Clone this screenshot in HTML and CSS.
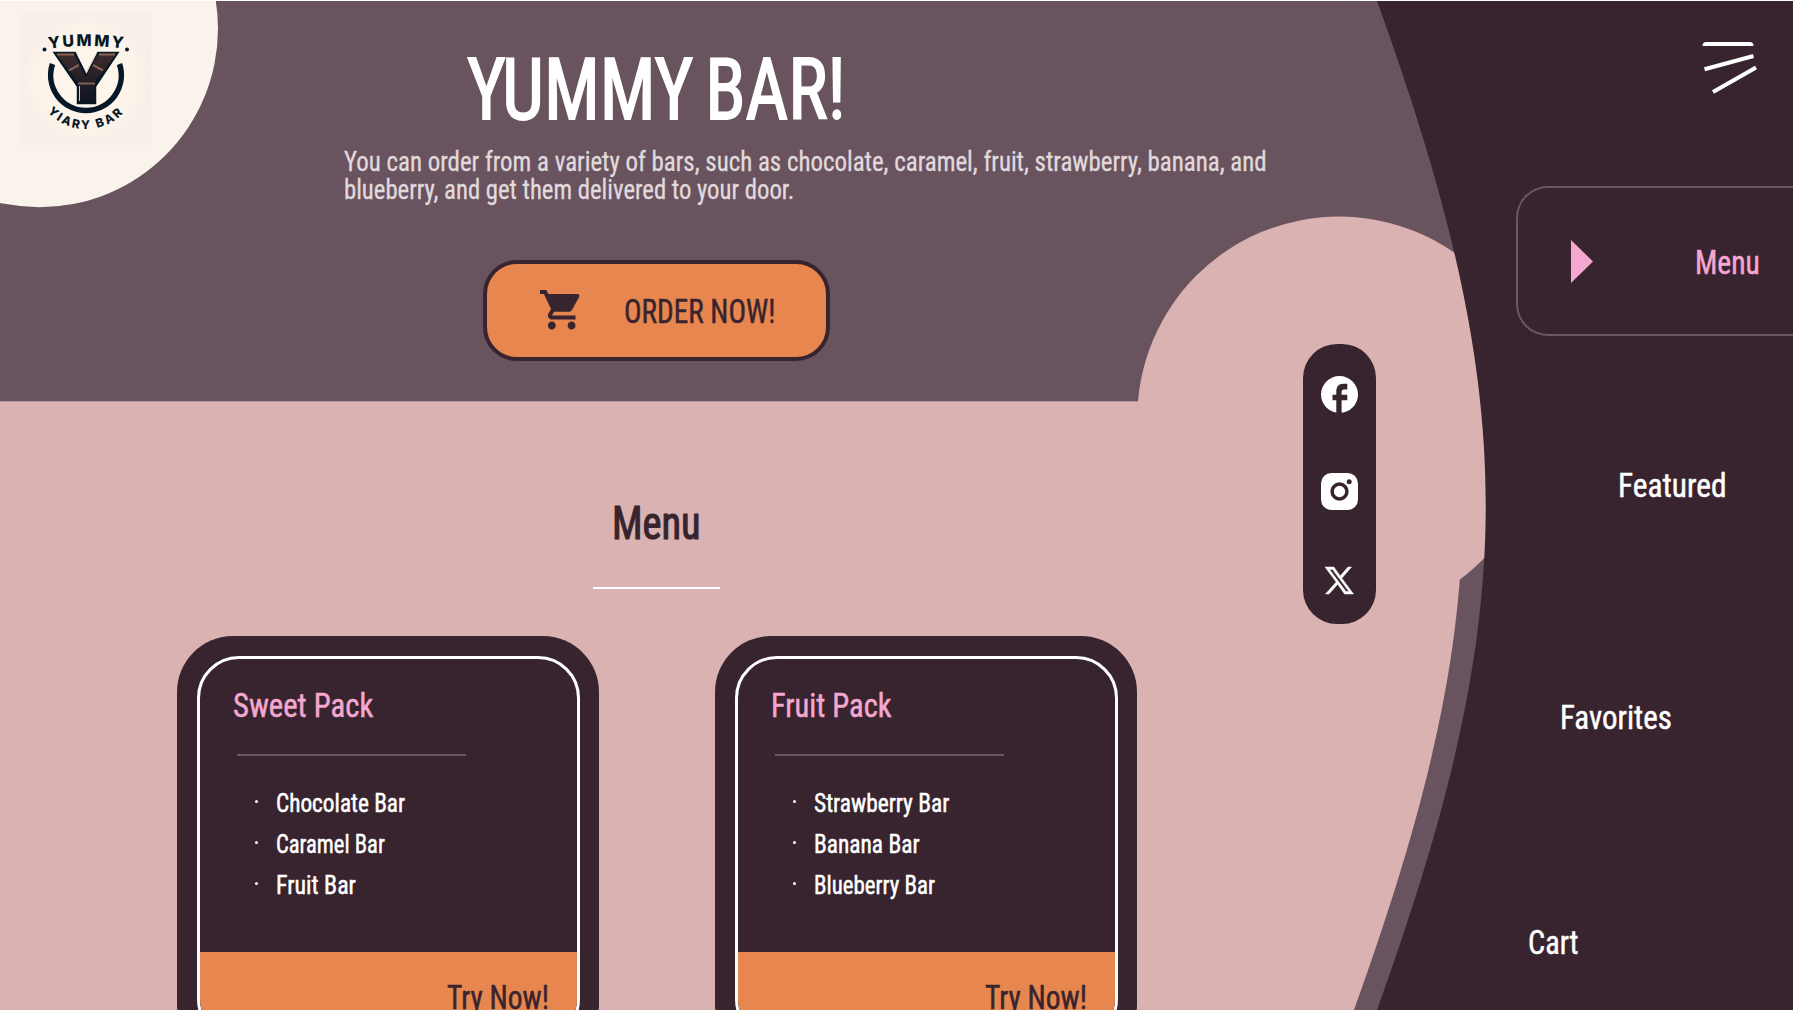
FILE: index.html
```html
<!DOCTYPE html>
<html lang="en">
<head>
<meta charset="utf-8">
<title>Yummy Bar</title>
<link rel="stylesheet" href="styles.css">
</head>
<body>
<svg class="backdrop" viewBox="0 0 1793 1010" aria-hidden="true">
  <rect class="fill-rose" width="1793" height="1010"/>
  <rect class="fill-plum" width="1793" height="401.3"/>
  <path class="fill-plum" transform="translate(-23 0)" d="M1377 1C1522 402 1522 608 1377 1010H1816V1Z"/>
  <circle class="fill-rose" cx="1339" cy="418.2" r="201.7"/>
  <path class="fill-dark" d="M1377 1C1522 402 1522 608 1377 1010H1793V1Z"/>
  <circle class="fill-cream" cx="39.5" cy="28.8" r="178.5"/>
  <rect class="fill-white" width="1793" height="1"/>
</svg>

<svg class="logo" viewBox="20 14 131 131" role="img" aria-label="Yummy Bar logo">
  <defs>
    <radialGradient id="paper"><stop offset="0" stop-color="#fff7ec"/><stop offset=".75" stop-color="#fcf3ea"/><stop offset="1" stop-color="#f7eee8"/></radialGradient>
    <linearGradient id="choc" x1="0" y1="0" x2="0" y2="1"><stop offset="0" stop-color="#3d2b2c"/><stop offset="1" stop-color="#0d1420"/></linearGradient>
    <path id="arc-top" d="M42 50Q86 42 132 50"/>
    <path id="arc-bottom" d="M38 96.200A51.500 51.500 0 0 0 134 96.200"/>
  </defs>
  <rect x="20" y="14" width="131" height="131" fill="url(#paper)"/>
  <path d="M52.500 64A35.300 35.300 0 1 0 119.500 64" fill="none" stroke="#061826" stroke-width="5.600"/>
  <path d="M51 51H76L86.500 72L97 51H121L97 87V105H76V87Z" fill="#061826" stroke="#fff7ec" stroke-width="1.500"/>
  <path d="M56 53.500H74L79 64L69 71ZM99 53.500H116L104 71L92 64ZM70 72L80 66L86 77L92 66L103 72L95 82H77ZM79 85H94V103H79Z" fill="url(#choc)"/>
  <path d="M57 54.500H74M99 54.500H115M69 70.500L79 65M93 65L103 70.500M78 83.500H95" stroke="#8a6255" stroke-width="2.200" fill="none"/>
  <path d="M79.500 86V101M86 73L96 54" stroke="#d8c9c0" stroke-width="1" fill="none"/>
  <circle cx="44.500" cy="49.500" r="2" fill="#061826"/><circle cx="127" cy="49.500" r="2" fill="#061826"/>
  <text class="logo-text logo-text-top"><textPath href="#arc-top" startOffset="50%">YUMMY</textPath></text>
  <text class="logo-text"><textPath href="#arc-bottom" startOffset="50%">YIARY BAR</textPath></text>
</svg>

<div class="page">
  <main class="main">
    <header class="hero">
      <h1 class="title"><span class="fit fit-title">YUMMY BAR!</span></h1>
      <p class="lead">
        <span class="fit fit-lead-1">You can order from a variety of bars, such as chocolate, caramel, fruit, strawberry, banana, and</span>
        <span class="fit fit-lead-2">blueberry, and get them delivered to your door.</span>
      </p>
      <a class="order">
        <svg class="order-icon" viewBox="0 0 24 24"><path d="M7 18c-1.100 0-1.990.9-1.990 2S5.900 22 7 22s2-.9 2-2-.9-2-2-2zM1 2v2h2l3.600 7.590-1.350 2.450c-.16.28-.25.61-.25.96 0 1.100.9 2 2 2h12v-2H7.420c-.14 0-.25-.11-.25-.25l.03-.12.9-1.630h7.450c.75 0 1.410-.41 1.750-1.030l3.580-6.490c.08-.14.12-.31.12-.48 0-.55-.45-1-1-1H5.210l-.94-2H1zm16 16c-1.100 0-1.990.9-1.990 2s.89 2 1.990 2 2-.9 2-2-.9-2-2-2z"/></svg>
        <span class="fit fit-order">ORDER NOW!</span>
      </a>
    </header>

    <section class="menu">
      <h2 class="heading"><span class="fit fit-heading">Menu</span></h2>
      <div class="cards">
        <article class="card">
          <div class="card-inner">
            <div class="card-body">
              <h3 class="card-title"><span class="fit fit-sweet">Sweet Pack</span></h3>
              <ul class="items">
                <li><span class="fit fit-chocolate">Chocolate Bar</span></li>
                <li><span class="fit fit-caramel">Caramel Bar</span></li>
                <li><span class="fit fit-fruit">Fruit Bar</span></li>
              </ul>
            </div>
            <a class="try"><span class="fit fit-try">Try Now!</span></a>
          </div>
        </article>
        <article class="card">
          <div class="card-inner">
            <div class="card-body">
              <h3 class="card-title"><span class="fit fit-fruit-pack">Fruit Pack</span></h3>
              <ul class="items">
                <li><span class="fit fit-strawberry">Strawberry Bar</span></li>
                <li><span class="fit fit-banana">Banana Bar</span></li>
                <li><span class="fit fit-blueberry">Blueberry Bar</span></li>
              </ul>
            </div>
            <a class="try"><span class="fit fit-try">Try Now!</span></a>
          </div>
        </article>
      </div>
    </section>
  </main>

  <nav class="nav">
    <svg class="burger" viewBox="0 0 60 56"><path class="fill-white" d="M2.500 6Q2.500 2 6 2H50Q53.500 2 53.500 6Z"/><path class="stroke-white" d="M4.500 29.300L53.500 16M13 52L56 27.500"/></svg>
    <a class="nav-active">
      <svg class="marker" viewBox="0 0 22 43"><path d="M0 0L22 21.500L0 43Z"/></svg>
      <span class="fit fit-nav-menu">Menu</span>
    </a>
    <a class="nav-link nav-featured"><span class="fit fit-featured">Featured</span></a>
    <a class="nav-link nav-favorites"><span class="fit fit-favorites">Favorites</span></a>
    <a class="nav-link nav-cart"><span class="fit fit-cart">Cart</span></a>
  </nav>
</div>

<div class="social">
  <svg class="facebook" viewBox="0 0 37 37"><circle class="fill-white" cx="18.500" cy="18.500" r="18.500"/><path class="fill-dark" d="M15.300 37V24.300H11.500V18.800H15.300V15.500C15.300 10.500 17.800 7.800 22.300 7.800H26.300V13.600H23.200C21.300 13.600 20.600 14.500 20.600 16V18.800H26.300V24.300H20.600V37Z"/></svg>
  <svg class="instagram" viewBox="0 0 37 37"><rect class="fill-white" width="37" height="37" rx="10.500"/><circle cx="18.500" cy="18.500" r="7.400" fill="none" stroke="#38242e" stroke-width="3.500"/><circle class="fill-dark" cx="28.200" cy="8.700" r="2.500"/></svg>
  <svg class="x-logo" viewBox="0 0 28 27"><path class="fill-white" stroke="#fff" stroke-width=".5" fill-rule="evenodd" d="M0 0H8.900L15.200 8.900L23 0H26.500L16.800 11.200L28.500 27H19.600L12.700 17.300L4 27H.5L11.200 15ZM4.500 2.400L21 24.500H23.900L7.600 2.400Z"/></svg>
</div>
</body>
</html>
```
FILE: styles.css
```css
* { box-sizing: border-box; margin: 0; padding: 0; }

:root {
  --rose: #dbb2b2;
  --plum: #69535f;
  --dark: #38242e;
  --cream: #faf3ec;
  --orange: #e7874f;
  --pink: #f4a8d0;
}

body {
  position: relative;
  height: 1010px;
  overflow: hidden;
  background: var(--rose);
  color: #fff;
  font-family: Roboto, "Liberation Sans", sans-serif;
  font-stretch: 75%;
  font-weight: 400;
}

.fill-rose { fill: var(--rose); }
.fill-plum { fill: var(--plum); }
.fill-dark { fill: var(--dark); }
.fill-cream { fill: var(--cream); }
.fill-white { fill: #fff; }
.stroke-white { fill: none; stroke: #fff; stroke-width: 4; }

.backdrop { position: absolute; inset: 0; width: 1793px; height: 1010px; }
.logo { position: absolute; left: 20px; top: 14px; width: 131px; height: 131px; }
.logo-text { font: 800 12px Inter, sans-serif; fill: #061826; text-anchor: middle; letter-spacing: 2.300px; }
.logo-text-top { font-size: 16px; letter-spacing: 2.200px; }

.page {
  position: relative;
  display: grid;
  grid-template-columns: 1313px 480px;
  height: 1010px;
}

/* Condensed lettering: each label is squeezed horizontally */
.fit {
  display: inline-block;
  white-space: nowrap;
  transform: scaleX(var(--sx, .9));
  transform-origin: left;
  -webkit-text-stroke: .5px currentColor;
}
.fit-title { --sx: .86; word-spacing: -6px; -webkit-text-stroke-width: 1.800px; }
.fit-lead-1 { --sx: .922; }
.fit-lead-2 { --sx: .916; }
.lead .fit { -webkit-text-stroke-width: .3px; }
.fit-order { --sx: .858; }
.fit-heading { --sx: .86; -webkit-text-stroke-width: 1.200px; }
.fit-sweet { --sx: .902; }
.fit-fruit-pack { --sx: .897; }
.fit-chocolate { --sx: .895; }
.fit-caramel { --sx: .868; }
.fit-fruit { --sx: .92; }
.fit-strawberry { --sx: .9; }
.fit-banana { --sx: .9; }
.fit-blueberry { --sx: .88; }
.fit-try { --sx: .867; }
.fit-nav-menu { --sx: .87; }
.fit-featured { --sx: .923; }
.fit-favorites { --sx: .91; }
.fit-cart { --sx: .89; }

.hero { height: 401px; padding-top: 47px; }
.title { padding-left: 467px; font-size: 86px; font-weight: 400; line-height: 86px; }
.lead { display: flex; flex-direction: column; margin-top: 15px; padding-left: 344px; font-size: 27px; line-height: 28px; color: #e1dadd; }
.order {
  display: flex;
  align-items: center;
  width: 347px;
  height: 101px;
  margin: 55.500px 0 0 483.400px;
  padding-left: 50.500px;
  border: 4px solid var(--dark);
  border-radius: 34px;
  background: var(--orange);
  color: var(--dark);
  font-size: 34px;
  line-height: 34px;
}
.order .fit { padding-top: 2px; }
.order-icon { width: 47.400px; height: 47.400px; margin-right: 39px; fill: var(--dark); }

.menu { padding-top: 98px; }
.heading {
  width: 127px;
  height: 90px;
  margin-left: 593.400px;
  padding-left: 18.500px;
  border-bottom: 2px solid #fff;
  color: var(--dark);
  font-size: 47px;
  font-weight: 400;
  line-height: 48px;
}
.cards { display: flex; gap: 116px; margin: 47px 0 0 177px; }
.card { width: 422px; height: 424px; padding: 19.500px; border-radius: 56px; background: var(--dark); }
.card-inner { height: 385px; overflow: hidden; border: 3px solid #fff; border-radius: 42px; }
.card-body { height: 293px; padding: 29px 0 0 33.500px; }
.card-title {
  width: 232px;
  height: 66px;
  color: var(--pink);
  font-size: 34px;
  font-weight: 400;
  line-height: 34px;
}
.items { width: 229px; margin-left: 4px; padding: 27px 0 0 38.500px; border-top: 2px solid #6a5761; list-style: none; font-size: 26px; line-height: 41px; }
.items li { display: flex; align-items: center; }
.items li::before { content: ""; width: 3px; height: 3px; margin: -3px 18px 0 -21px; border-radius: 50%; background: #fff; }
.try { display: flex; height: 90px; padding: 28px 0 0 247px; background: var(--orange); color: var(--dark); font-size: 34px; line-height: 34px; }

.nav { display: flex; flex-direction: column; font-size: 34px; line-height: 34px; }
.burger { width: 60px; height: 56px; margin: 40px 0 90px 387px; }
.nav-active {
  display: flex;
  align-items: center;
  height: 150px;
  margin-left: 203.400px;
  padding-left: 52.500px;
  border: 2px solid #6a5761;
  border-right: 0;
  border-radius: 32px 0 0 32px;
  color: var(--pink);
}
.nav-active .fit { padding-top: 2px; }
.marker { width: 22px; height: 43px; margin-right: 102px; fill: var(--pink); }
.nav-featured { margin: 132px 0 0 305px; }
.nav-favorites { margin: 198px 0 0 247px; }
.nav-cart { margin: 191px 0 0 215px; }

.social {
  position: absolute;
  left: 1302.500px;
  top: 343.500px;
  display: flex;
  flex-direction: column;
  align-items: center;
  width: 73px;
  height: 280px;
  padding-top: 32px;
  border-radius: 34px;
  background: var(--dark);
}
.facebook { width: 37px; height: 37px; }
.instagram { width: 37px; height: 37px; margin-top: 60px; }
.x-logo { width: 28px; height: 27px; margin-top: 57.500px; overflow: visible; }
```
